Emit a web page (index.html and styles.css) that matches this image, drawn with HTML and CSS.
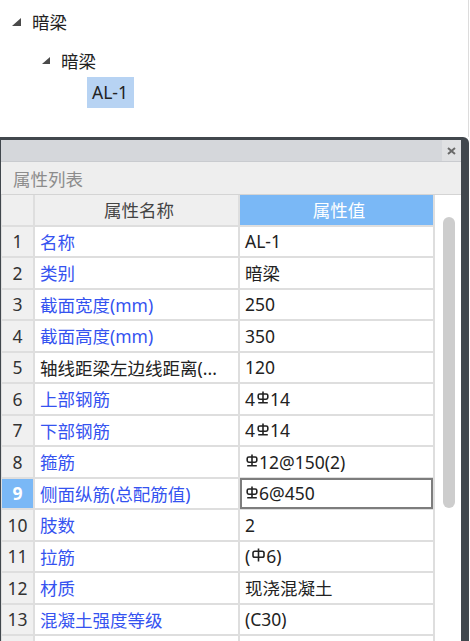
FILE: index.html
```html
<!DOCTYPE html>
<html>
<head>
<meta charset="utf-8">
<link rel="stylesheet" href="styles.css">
</head>
<body>
<div class="tree">
  <div class="node n1"><svg class="tri" width="9" height="8" viewBox="0 0 9 8"><polygon points="9,0 9,8 0,8"/></svg><span>暗梁</span></div>
  <div class="node n2"><svg class="tri" width="8" height="7" viewBox="0 0 8 7"><polygon points="8,0 8,7 0,7"/></svg><span>暗梁</span></div>
  <div class="node n3"><span class="sel">AL-1</span></div>
</div>
<div class="panel">
  <div class="win">
    <div class="titlebar"><span class="close"><svg width="9" height="8" viewBox="0 0 9 8"><path d="M1 1L8 7M8 1L1 7"/></svg></span></div>
    <div class="caption">属性列表</div>
    <div class="body">
      <div class="grid">
        <div class="hd num"></div><div class="hd name c">属性名称</div><div class="hd val">属性值</div>
        <div class="num">1</div><div class="name">名称</div><div class="val">AL-1</div>
        <div class="num">2</div><div class="name">类别</div><div class="val">暗梁</div>
        <div class="num">3</div><div class="name">截面宽度(mm)</div><div class="val">250</div>
        <div class="num">4</div><div class="name">截面高度(mm)</div><div class="val">350</div>
        <div class="num">5</div><div class="name black">轴线距梁左边线距离(...</div><div class="val">120</div>
        <div class="num">6</div><div class="name">上部钢筋</div><div class="val">4<svg class="sym" width="12" height="13" viewBox="0 0 12 13"><path d="M6 0.5V12.5M1.2 11.8H10.8"/><rect x="1.2" y="3" width="9.6" height="5.2" rx="1.6"/></svg>14</div>
        <div class="num">7</div><div class="name">下部钢筋</div><div class="val">4<svg class="sym" width="12" height="13" viewBox="0 0 12 13"><path d="M6 0.5V12.5M1.2 11.8H10.8"/><rect x="1.2" y="3" width="9.6" height="5.2" rx="1.6"/></svg>14</div>
        <div class="num">8</div><div class="name">箍筋</div><div class="val"><svg class="sym lead" width="12" height="13" viewBox="0 0 12 13"><path d="M6 0.5V12.5M1.2 11.8H10.8"/><rect x="1.2" y="3" width="9.6" height="5.2" rx="1.6"/></svg>12@150(2)</div>
        <div class="num cur">9</div><div class="name">侧面纵筋(总配筋值)</div><div class="val edit"><svg class="sym lead" width="12" height="13" viewBox="0 0 12 13"><path d="M6 0.5V12.5M1.2 11.8H10.8"/><rect x="1.2" y="3" width="9.6" height="5.2" rx="1.6"/></svg>6@450</div>
        <div class="num">10</div><div class="name">肢数</div><div class="val">2</div>
        <div class="num">11</div><div class="name">拉筋</div><div class="val">(<svg class="sym" width="13" height="14" viewBox="0 0 13 14"><path d="M6.5 0.5V13.5"/><rect x="1" y="3.2" width="11" height="6" rx="1.8"/></svg>6)</div>
        <div class="num">12</div><div class="name">材质</div><div class="val">现浇混凝土</div>
        <div class="num">13</div><div class="name">混凝土强度等级</div><div class="val">(C30)</div>
        <div class="num"></div><div class="name"></div><div class="val"></div>
      </div>
      <div class="scroll"><div class="thumb"></div></div>
    </div>
  </div>
</div>
</body>
</html>
```
FILE: styles.css
```css
* { box-sizing: border-box; }
html, body { margin: 0; padding: 0; background: #fff; }
body {
  width: 470px;
  height: 641px;
  overflow: hidden;
  font-family: "Noto Sans", "Noto Sans CJK SC", sans-serif;
  font-size: 17.5px;
  color: #222;
}
.tree {
  height: 137px;
  width: 469px;
  border-right: 1px solid #dcdcdc;
  padding-top: 8px;
  display: flex;
  flex-direction: column;
}
.node {
  display: flex;
  align-items: center;
  height: 27px;
  gap: 11px;
}
.tri { fill: #4a4a4a; }
.n1 { padding-left: 12px; }
.n2 { padding-left: 42px; margin-top: 12px; }
.n3 { padding-left: 87px; margin-top: 3px; height: 31px; }
.sel {
  background: #b7d3f3;
  height: 31px;
  line-height: 31px;
  padding: 0 6px 0 5px;
}
.panel {
  width: 469px;
  height: 504px;
  background: #41474d;
  padding: 3px 8px 0 1px;
  border-top-right-radius: 6px;
  overflow: hidden;
}
.win {
  height: 100%;
  background: #fff;
  display: flex;
  flex-direction: column;
}
.titlebar {
  height: 22px;
  background: #d5d7db;
  border-bottom: 1px solid #c9cbcf;
  display: flex;
  justify-content: flex-end;
}
.close {
  width: 19px;
  height: 21px;
  background: #e0e1e3;
  display: flex;
  align-items: center;
  justify-content: center;
}
.close path { stroke: #6a6a6a; stroke-width: 2; fill: none; }
.caption {
  height: 33px;
  background: #eeeeee;
  border-bottom: 1px solid #d4d4d4;
  color: #8c8c8c;
  padding-left: 12px;
  display: flex;
  align-items: center;
}
.body {
  flex: 1;
  display: flex;
  min-height: 0;
}
.grid {
  width: 434px;
  display: grid;
  grid-template-columns: 31px 203px 193px;
  grid-auto-rows: 29.5px;
  gap: 2px;
  padding: 0 2px 0 1px;
  background: #dedede;
  align-content: start;
}
.grid > div {
  display: flex;
  align-items: center;
  white-space: nowrap;
  overflow: hidden;
}
.num {
  background: #f0f0f0;
  justify-content: center;
  color: #333;
}
.num.cur {
  background: #7ab8f6;
  color: #fff;
  font-weight: bold;
}
.name {
  background: #fff;
  color: #3553f0;
  padding-left: 5px;
}
.name.black { color: #222; }
.val {
  background: #fff;
  padding-left: 5px;
  color: #222;
}
.hd.num, .hd.name {
  background: #efefef;
  color: #444;
}
.hd.name { justify-content: center; }
.hd.val {
  background: #7ab8f6;
  color: #fff;
  justify-content: center;
}
.val.edit {
  border: 2px solid #7d7d7d;
  padding-left: 3px;
  margin: -1px 0 -1px 0;
}
.sym {
  margin: 0 1px 0 2px;
  position: relative;
  top: -1px;
}
.sym.lead { margin-left: 1px; }
.sym path, .sym rect { stroke: #222; stroke-width: 1.6; fill: none; }
.scroll {
  width: 26px;
  background: #fff;
  padding: 22px 0 0 8px;
}
.thumb {
  width: 12px;
  height: 291px;
  background: #cdcdcd;
  border-radius: 6px;
}
```
